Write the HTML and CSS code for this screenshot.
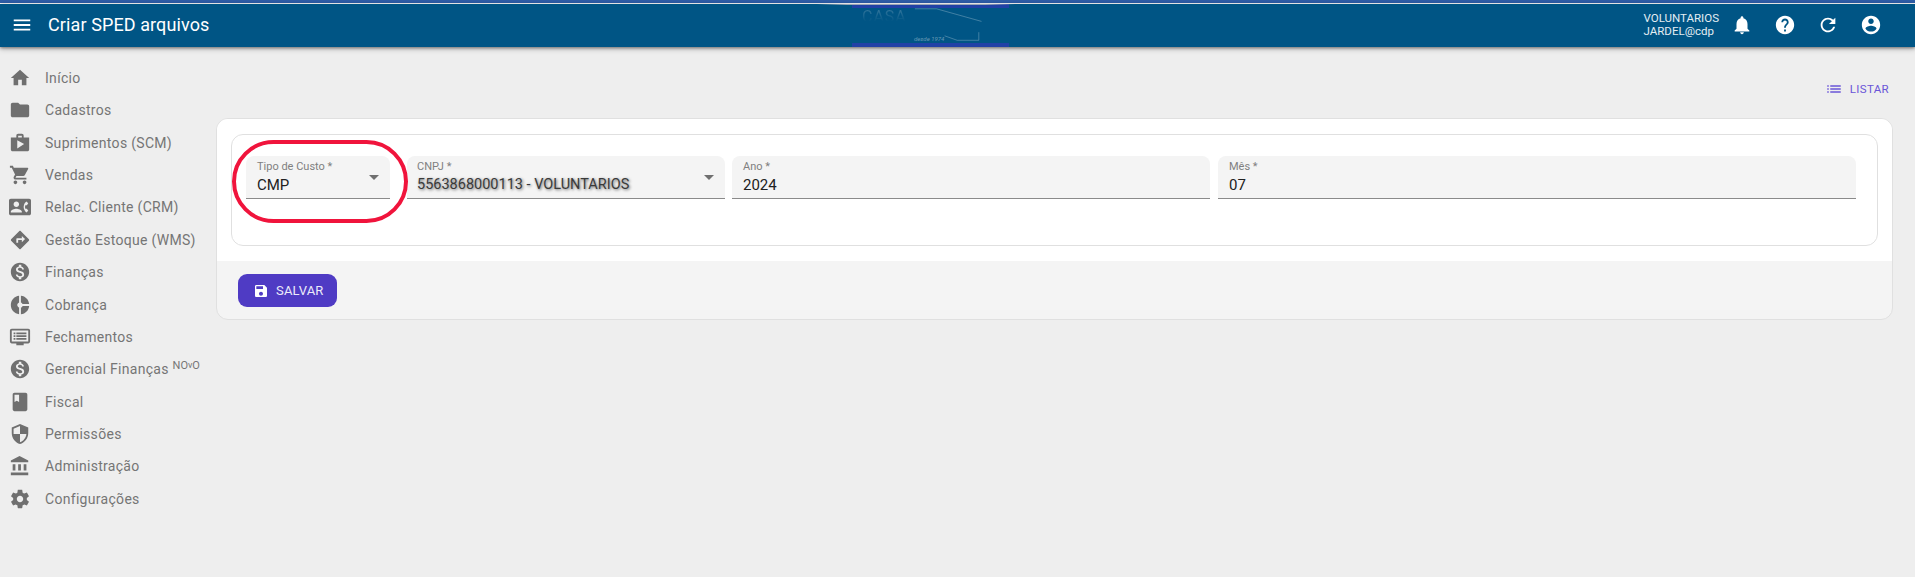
FILE: index.html
```html
<!DOCTYPE html>
<html lang="pt-BR">
<head>
<meta charset="utf-8">
<title>Criar SPED arquivos</title>
<link rel="stylesheet" href="styles.css">
</head>
<body>
<div class="stripe"></div>
<header class="topbar">
  <svg class="ico menu-ico" viewBox="0 0 24 24"><path d="M3 18h18v-2H3v2zm0-5h18v-2H3v2zm0-7v2h18V6H3z"/></svg>
  <h1 class="title">Criar SPED arquivos</h1>
  <div class="logo">
    <span class="logo-casa">CASA</span>
    <svg class="logo-line" viewBox="0 0 80 40" fill="none"><path d="M1 2h24l50 14M34 32l14 5h24V28"/></svg>
    <span class="logo-since">desde 1974</span>
  </div>
  <div class="top-right">
    <div class="user"><div>VOLUNTARIOS</div><div>JARDEL@cdp</div></div>
    <svg class="ico top-ico" viewBox="0 0 24 24"><path d="M12 22c1.1 0 2-.9 2-2h-4c0 1.1.89 2 2 2zm6-6v-5c0-3.07-1.64-5.64-4.5-6.32V4c0-.83-.67-1.5-1.5-1.5s-1.5.67-1.5 1.5v.68C7.63 5.36 6 7.92 6 11v5l-2 2v1h16v-1l-2-2z"/></svg>
    <svg class="ico top-ico" viewBox="0 0 24 24"><path d="M12 2C6.48 2 2 6.48 2 12s4.48 10 10 10 10-4.48 10-10S17.52 2 12 2zm1 17h-2v-2h2v2zm2.07-7.75l-.9.92C13.45 12.9 13 13.5 13 15h-2v-.5c0-1.1.45-2.1 1.17-2.83l1.24-1.26c.37-.36.59-.86.59-1.41 0-1.1-.9-2-2-2s-2 .9-2 2H8c0-2.21 1.79-4 4-4s4 1.79 4 4c0 .88-.36 1.68-.93 2.25z"/></svg>
    <svg class="ico top-ico" viewBox="0 0 24 24"><path d="M17.65 6.35C16.2 4.9 14.21 4 12 4c-4.42 0-7.99 3.58-7.99 8s3.57 8 7.99 8c3.73 0 6.84-2.55 7.73-6h-2.08c-.82 2.33-3.04 4-5.65 4-3.31 0-6-2.69-6-6s2.69-6 6-6c1.66 0 3.14.69 4.22 1.78L13 11h7V4l-2.35 2.35z"/></svg>
    <svg class="ico top-ico" viewBox="0 0 24 24"><path d="M12 2C6.48 2 2 6.48 2 12s4.48 10 10 10 10-4.48 10-10S17.52 2 12 2zm0 3c1.66 0 3 1.34 3 3s-1.34 3-3 3-3-1.34-3-3 1.34-3 3-3zm0 14.2c-2.5 0-4.71-1.28-6-3.22.03-1.99 4-3.08 6-3.08 1.99 0 5.97 1.09 6 3.08-1.29 1.94-3.5 3.22-6 3.22z"/></svg>
  </div>
</header>
<div class="layout">
  <nav class="sidebar">
    <a class="nav-item"><svg class="ico nav-ico" viewBox="0 0 24 24"><path d="M10 20v-6h4v6h5v-8h3L12 3 2 12h3v8z"/></svg><span>Início</span></a>
    <a class="nav-item"><svg class="ico nav-ico" viewBox="0 0 24 24"><path d="M10 4H4c-1.1 0-1.99.9-1.99 2L2 18c0 1.1.9 2 2 2h16c1.1 0 2-.9 2-2V8c0-1.1-.9-2-2-2h-8l-2-2z"/></svg><span>Cadastros</span></a>
    <a class="nav-item"><svg class="ico nav-ico" viewBox="0 0 24 24"><path d="M16 6V4c0-1.11-.89-2-2-2h-4c-1.11 0-2 .89-2 2v2H2v13c0 1.11.89 2 2 2h16c1.11 0 2-.89 2-2V6h-6zm-6-2h4v2h-4V4zM9 18V9l7.5 4L9 18z"/></svg><span>Suprimentos (SCM)</span></a>
    <a class="nav-item"><svg class="ico nav-ico" viewBox="0 0 24 24"><path d="M7 18c-1.1 0-1.99.9-1.99 2S5.9 22 7 22s2-.9 2-2-.9-2-2-2zM1 2v2h2l3.6 7.59-1.35 2.45c-.16.28-.25.61-.25.96 0 1.1.9 2 2 2h12v-2H7.42c-.14 0-.25-.11-.25-.25l.03-.12.9-1.63h7.45c.75 0 1.41-.41 1.75-1.03l3.58-6.47c.08-.14.12-.31.12-.48 0-.55-.45-1-1-1H5.21l-.94-2H1zm16 16c-1.1 0-1.99.9-1.99 2s.89 2 1.99 2 2-.9 2-2-.9-2-2-2z"/></svg><span>Vendas</span></a>
    <a class="nav-item"><svg class="ico nav-ico" viewBox="0 0 24 24"><path d="M22 3H2C.9 3 0 3.9 0 5v14c0 1.1.9 2 2 2h20c1.1 0 1.99-.9 1.99-2L24 5c0-1.1-.9-2-2-2zM8 6c1.66 0 3 1.34 3 3s-1.34 3-3 3-3-1.34-3-3 1.34-3 3-3zm6 12H2v-1c0-2 4-3.1 6-3.1s6 1.1 6 3.1v1zm3.85-4h1.64L21 16l-1.99 1.99c-1.31-.98-2.28-2.38-2.73-3.99-.18-.64-.28-1.31-.28-2s.1-1.36.28-2c.45-1.62 1.42-3.01 2.73-3.99L21 8l-1.51 2h-1.64c-.22.63-.35 1.3-.35 2s.13 1.37.35 2z"/></svg><span>Relac. Cliente (CRM)</span></a>
    <a class="nav-item"><svg class="ico nav-ico" viewBox="0 0 24 24"><path d="M21.71 11.29l-9-9c-.39-.39-1.02-.39-1.41 0l-9 9c-.39.39-.39 1.02 0 1.41l9 9c.39.39 1.02.39 1.41 0l9-9c.39-.38.39-1.01 0-1.41zM14 14.5V12h-4v3H8v-4c0-.55.45-1 1-1h5V7.5l3.5 3.5-3.5 3.5z"/></svg><span>Gestão Estoque (WMS)</span></a>
    <a class="nav-item"><svg class="ico nav-ico" viewBox="0 0 24 24"><path d="M12 2C6.48 2 2 6.48 2 12s4.48 10 10 10 10-4.48 10-10S17.52 2 12 2zm1.41 16.09V20h-2.67v-1.93c-1.71-.36-3.16-1.46-3.27-3.4h1.96c.1 1.05.82 1.87 2.65 1.87 1.96 0 2.4-.98 2.4-1.59 0-.83-.44-1.61-2.67-2.14-2.48-.6-4.18-1.62-4.18-3.67 0-1.72 1.39-2.84 3.11-3.21V4h2.67v1.95c1.86.45 2.79 1.86 2.87 3.39H14.3c-.05-1.11-.64-1.87-2.22-1.87-1.5 0-2.4.68-2.4 1.64 0 .84.65 1.39 2.67 1.91s4.18 1.39 4.18 3.91c-.01 1.83-1.38 2.83-3.12 3.16z"/></svg><span>Finanças</span></a>
    <a class="nav-item"><svg class="ico nav-ico" viewBox="0 0 24 24"><path d="M11 9.16V2c-5 .5-9 4.79-9 10s4 9.5 9 10v-7.16c-1-.41-2-1.52-2-2.84s1-2.43 2-2.84zM14.86 11H22c-.48-4.75-4-8.53-9-9v7.16c1 .3 1.52.98 1.86 1.84zM13 14.84V22c5-.47 8.52-4.25 9-9h-7.14c-.34.86-.86 1.54-1.86 1.84z"/></svg><span>Cobrança</span></a>
    <a class="nav-item"><svg class="ico nav-ico" viewBox="0 0 24 24"><path d="M21 3H3c-1.1 0-2 .9-2 2v12c0 1.1.9 2 2 2h5v2h8v-2h5c1.1 0 2-.9 2-2V5c0-1.1-.9-2-2-2zm0 14H3V5h18v12zM5 7h2v2H5zm3 0h11v2H8zm-3 3h2v2H5zm3 0h11v2H8zm-3 3h2v2H5zm3 0h11v2H8z"/></svg><span>Fechamentos</span></a>
    <a class="nav-item"><svg class="ico nav-ico" viewBox="0 0 24 24"><path d="M12 2C6.48 2 2 6.48 2 12s4.48 10 10 10 10-4.48 10-10S17.52 2 12 2zm1.41 16.09V20h-2.67v-1.93c-1.71-.36-3.16-1.46-3.27-3.4h1.96c.1 1.05.82 1.87 2.65 1.87 1.96 0 2.4-.98 2.4-1.59 0-.83-.44-1.61-2.67-2.14-2.48-.6-4.18-1.62-4.18-3.67 0-1.72 1.39-2.84 3.11-3.21V4h2.67v1.95c1.86.45 2.79 1.86 2.87 3.39H14.3c-.05-1.11-.64-1.87-2.22-1.87-1.5 0-2.4.68-2.4 1.64 0 .84.65 1.39 2.67 1.91s4.18 1.39 4.18 3.91c-.01 1.83-1.38 2.83-3.12 3.16z"/></svg><span>Gerencial Finanças <sup class="novo">NO<span class="novo-v">v</span>O</sup></span></a>
    <a class="nav-item"><svg class="ico nav-ico" viewBox="0 0 24 24"><path d="M18 2H6c-1.1 0-2 .9-2 2v16c0 1.1.9 2 2 2h12c1.1 0 2-.9 2-2V4c0-1.1-.9-2-2-2zM6 4h5v8l-2.5-1.5L6 12V4z"/></svg><span>Fiscal</span></a>
    <a class="nav-item"><svg class="ico nav-ico" viewBox="0 0 24 24"><path d="M12 1L3 5v6c0 5.55 3.84 10.74 9 12 5.16-1.26 9-6.45 9-12V5l-9-4zm0 10.99h7c-.53 4.12-3.28 7.79-7 8.94V12H5V6.3l7-3.11v8.8z"/></svg><span>Permissões</span></a>
    <a class="nav-item"><svg class="ico nav-ico" viewBox="0 0 24 24"><path d="M4 10v7h3v-7H4zm6 0v7h3v-7h-3zM2 22h19v-3H2v3zm14-12v7h3v-7h-3zm-4.5-9L2 6v2h19V6l-9.5-5z"/></svg><span>Administração</span></a>
    <a class="nav-item"><svg class="ico nav-ico" viewBox="0 0 24 24"><path d="M19.43 12.98c.04-.32.07-.64.07-.98s-.03-.66-.07-.98l2.11-1.65c.19-.15.24-.42.12-.64l-2-3.46c-.12-.22-.39-.3-.61-.22l-2.49 1c-.52-.4-1.08-.73-1.69-.98l-.38-2.65C14.46 2.18 14.25 2 14 2h-4c-.25 0-.46.18-.49.42l-.38 2.65c-.61.25-1.17.59-1.69.98l-2.49-1c-.23-.09-.49 0-.61.22l-2 3.46c-.13.22-.07.49.12.64l2.11 1.65c-.04.32-.07.65-.07.98s.03.66.07.98l-2.11 1.65c-.19.15-.24.42-.12.64l2 3.46c.12.22.39.3.61.22l2.49-1c.52.4 1.08.73 1.69.98l.38 2.65c.03.24.24.42.49.42h4c.25 0 .46-.18.49-.42l.38-2.65c.61-.25 1.17-.59 1.69-.98l2.49 1c.23.09.49 0 .61-.22l2-3.46c.12-.22.07-.49-.12-.64l-2.11-1.65zM12 15.5c-1.93 0-3.5-1.57-3.5-3.5s1.57-3.5 3.5-3.5 3.5 1.57 3.5 3.5-1.57 3.5-3.5 3.5z"/></svg><span>Configurações</span></a>
  </nav>
  <main class="content">
    <div class="actions">
      <a class="list-btn"><svg class="ico list-ico" viewBox="0 0 24 24"><path d="M3 13h2v-2H3v2zm0 4h2v-2H3v2zm0-8h2V7H3v2zm4 4h14v-2H7v2zm0 4h14v-2H7v2zM7 7v2h14V7H7z"/></svg>LISTAR</a>
    </div>
    <section class="card">
      <div class="card-body">
        <div class="group">
          <div class="field f-tipo">
            <label class="f-label">Tipo de Custo *</label>
            <div class="f-value">CMP</div>
            <span class="caret"></span>
          </div>
          <div class="field f-cnpj">
            <label class="f-label">CNPJ *</label>
            <div class="f-value blurred">5563868000113 - VOLUNTARIOS</div>
            <span class="caret"></span>
          </div>
          <div class="field f-ano">
            <label class="f-label">Ano *</label>
            <div class="f-value">2024</div>
          </div>
          <div class="field f-mes">
            <label class="f-label">Mês *</label>
            <div class="f-value">07</div>
          </div>
          <div class="highlight"></div>
        </div>
      </div>
      <div class="card-foot">
        <button class="save-btn" type="button"><svg class="ico save-ico" viewBox="0 0 24 24"><path d="M17 3H5c-1.11 0-2 .9-2 2v14c0 1.1.89 2 2 2h14c1.1 0 2-.89 2-2V7l-4-4zm-5 16c-1.66 0-3-1.34-3-3s1.34-3 3-3 3 1.34 3 3-1.34 3-3 3zm3-10H5V5h10v4z"/></svg>SALVAR</button>
      </div>
    </section>
  </main>
</div>
</body>
</html>
```
FILE: styles.css
```css
* { box-sizing: border-box; }
html, body { height: 100%; }
body {
  margin: 0;
  background: #eeeeee;
  font-family: Roboto, "Liberation Sans", sans-serif;
  overflow: hidden;
}
.ico { display: block; fill: currentColor; flex: none; }

.stripe {
  height: 4px;
  background: #2f5da6;
  border-bottom: 1px solid #ffffff;
}
.topbar {
  position: relative;
  height: 43px;
  background: #005585;
  color: #fff;
  display: flex;
  align-items: center;
  padding: 0 0 0 11px;
  box-shadow: 0 1px 3px rgba(0,0,0,.45), 0 2px 6px rgba(0,0,0,.2);
  z-index: 2;
}
.menu-ico { width: 22px; height: 22px; margin-top: -2px; }
.title {
  margin: -2px 0 0 15px;
  font-size: 18px;
  font-weight: 400;
  letter-spacing: .1px;
}
.logo {
  position: absolute;
  left: 852px;
  top: 0;
  width: 157px;
  height: 43px;
  border-top: 4px solid #2141a6;
  border-bottom: 4px solid #2141a6;
}
.logo::before {
  content: "";
  position: absolute;
  left: -35px;
  right: -6px;
  top: -4px;
  height: 1px;
  background: linear-gradient(90deg, transparent, #9aa6b5 15%, #9aa6b5 85%, transparent);
}
.logo-casa {
  position: absolute;
  left: 10px;
  top: 0;
  font-size: 16px;
  line-height: 18px;
  letter-spacing: 1px;
  color: transparent;
  background: linear-gradient(180deg, rgba(255,255,255,.22), rgba(255,255,255,0) 75%);
  -webkit-background-clip: text;
  background-clip: text;
}
.logo-line {
  position: absolute;
  left: 62px;
  top: -2px;
  width: 72px;
  height: 38px;
  stroke: rgba(255,255,255,.4);
  stroke-width: .7;
}
.logo-since {
  position: absolute;
  left: 62px;
  top: 27px;
  font-size: 6px;
  font-style: italic;
  color: rgba(255,255,255,.4);
}
.top-right {
  margin-left: auto;
  display: flex;
  align-items: center;
  margin-top: -2px;
  padding-right: 33px;
}
.user {
  font-size: 11.5px;
  line-height: 12.5px;
  color: #e4edf3;
  margin-right: 12px;
}
.top-ico { width: 22px; height: 22px; margin-left: 21px; }
.user + .top-ico { margin-left: 0; }

.layout { display: flex; height: 530px; }
.sidebar {
  width: 216px;
  flex: none;
  padding-top: 14.6px;
}
.nav-item {
  display: flex;
  align-items: center;
  height: 32.4px;
  padding-left: 9px;
  color: #757575;
  font-size: 14px;
  letter-spacing: .3px;
  white-space: nowrap;
}
.nav-ico { width: 22px; height: 22px; margin-right: 14px; color: #6f6f6f; }
.novo { font-size: 11px; line-height: 0; vertical-align: 5px; letter-spacing: 0; }
.novo-v { font-size: 9px; vertical-align: 1px; }

.content { flex: 1; padding-right: 22px; min-width: 0; }
.actions {
  height: 71px;
  display: flex;
  justify-content: flex-end;
  align-items: flex-start;
  padding-top: 32px;
}
.list-btn {
  display: flex;
  align-items: center;
  height: 20px;
  color: #6a55d8;
  font-size: 11.5px;
  letter-spacing: .35px;
  margin-right: 4px;
}
.list-ico { width: 18px; height: 18px; margin-right: 7px; }

.card {
  height: 202px;
  background: #f4f4f4;
  border: 1px solid #e0e0e0;
  border-radius: 12px;
  overflow: hidden;
}
.card-body {
  height: 142px;
  background: #fff;
  padding: 15px 14px 0;
}
.group {
  position: relative;
  height: 112px;
  border: 1px solid #e0e0e0;
  border-radius: 12px;
  padding: 21px 21px 0 14px;
  display: flex;
  align-items: flex-start;
  gap: 7px;
}
.field {
  position: relative;
  height: 43px;
  background: #f4f4f4;
  border-radius: 8px 8px 0 0;
  border-bottom: 1px solid #8a8a8a;
  padding: 4px 11px 0;
}
.f-tipo { width: 144px; margin-right: 10px; }
.f-cnpj { width: 318px; padding-left: 10px; }
.f-ano { width: 478px; margin-right: 1px; }
.f-mes { flex: 1; }
.f-label {
  display: block;
  font-size: 11px;
  line-height: 14px;
  color: #808080;
  letter-spacing: 0;
}
.f-value {
  font-size: 15px;
  line-height: 18px;
  margin-top: 2px;
  color: #212121;
}
.f-value.blurred {
  font-size: 14.5px;
  color: #3a3a3a;
  text-shadow: 1px 1px 3px rgba(0,0,0,.6);
  white-space: nowrap;
}
.caret {
  position: absolute;
  right: 11px;
  top: 19px;
  border-left: 5px solid transparent;
  border-right: 5px solid transparent;
  border-top: 5px solid #6f6f6f;
}
.highlight {
  position: absolute;
  left: 0;
  top: 5px;
  width: 176px;
  height: 83px;
  border: 4.5px solid #f0143c;
  border-radius: 42px;
  pointer-events: none;
}
.card-foot { padding: 13px 21px; }
.save-btn {
  display: flex;
  align-items: center;
  width: 99px;
  height: 33px;
  padding: 0 0 0 15px;
  border: 0;
  border-radius: 9px;
  background: #4f3bc4;
  color: #ecebfa;
  font-family: inherit;
  font-size: 13px;
  letter-spacing: .2px;
}
.save-ico { width: 16px; height: 16px; margin-right: 7px; color: #fff; }
```
